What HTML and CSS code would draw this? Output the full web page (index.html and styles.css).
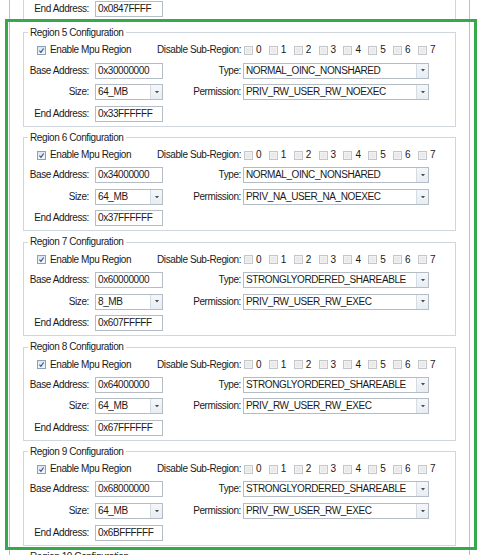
FILE: index.html
```html
<!DOCTYPE html>
<html>
<head>
<meta charset="utf-8">
<title>MPU Regions</title>
<link rel="stylesheet" href="styles.css">
</head>
<body>
<div class="page">
  <div class="frame">
    <div class="region partial">
      <div class="grid one">
        <span class="lbl">End Address:</span>
        <div class="tb">0x0847FFFF</div>
      </div>
    </div>

    <fieldset class="region">
      <legend>Region 5 Configuration</legend>
      <div class="grid">
        <div class="row1">
          <label class="enable"><span class="cb on"><svg viewBox="0 0 10 10"><path d="M2 5.2 L4.2 7.6 L8 2.2" /></svg></span>Enable Mpu Region</label>
          <span class="dis">Disable Sub-Region:</span>
          <div class="subs">
            <span class="sub"><span class="cb off"></span>0</span><span class="sub"><span class="cb off"></span>1</span><span class="sub"><span class="cb off"></span>2</span><span class="sub"><span class="cb off"></span>3</span><span class="sub"><span class="cb off"></span>4</span><span class="sub"><span class="cb off"></span>5</span><span class="sub"><span class="cb off"></span>6</span><span class="sub"><span class="cb off"></span>7</span>
          </div>
        </div>
        <span class="lbl">Base Address:</span>
        <div class="tb">0x30000000</div>
        <span class="lbl r">Type:</span>
        <div class="cbo">NORMAL_OINC_NONSHARED<span class="btn"><svg viewBox="0 0 5 3"><path d="M0 0H5L2.5 3Z"/></svg></span></div>
        <span class="lbl">Size:</span>
        <div class="cbo">64_MB<span class="btn"><svg viewBox="0 0 5 3"><path d="M0 0H5L2.5 3Z"/></svg></span></div>
        <span class="lbl r">Permission:</span>
        <div class="cbo">PRIV_RW_USER_RW_NOEXEC<span class="btn"><svg viewBox="0 0 5 3"><path d="M0 0H5L2.5 3Z"/></svg></span></div>
        <span class="lbl">End Address:</span>
        <div class="tb">0x33FFFFFF</div>
      </div>
    </fieldset>

    <fieldset class="region">
      <legend>Region 6 Configuration</legend>
      <div class="grid">
        <div class="row1">
          <label class="enable"><span class="cb on"><svg viewBox="0 0 10 10"><path d="M2 5.2 L4.2 7.6 L8 2.2" /></svg></span>Enable Mpu Region</label>
          <span class="dis">Disable Sub-Region:</span>
          <div class="subs">
            <span class="sub"><span class="cb off"></span>0</span><span class="sub"><span class="cb off"></span>1</span><span class="sub"><span class="cb off"></span>2</span><span class="sub"><span class="cb off"></span>3</span><span class="sub"><span class="cb off"></span>4</span><span class="sub"><span class="cb off"></span>5</span><span class="sub"><span class="cb off"></span>6</span><span class="sub"><span class="cb off"></span>7</span>
          </div>
        </div>
        <span class="lbl">Base Address:</span>
        <div class="tb">0x34000000</div>
        <span class="lbl r">Type:</span>
        <div class="cbo">NORMAL_OINC_NONSHARED<span class="btn"><svg viewBox="0 0 5 3"><path d="M0 0H5L2.5 3Z"/></svg></span></div>
        <span class="lbl">Size:</span>
        <div class="cbo">64_MB<span class="btn"><svg viewBox="0 0 5 3"><path d="M0 0H5L2.5 3Z"/></svg></span></div>
        <span class="lbl r">Permission:</span>
        <div class="cbo">PRIV_NA_USER_NA_NOEXEC<span class="btn"><svg viewBox="0 0 5 3"><path d="M0 0H5L2.5 3Z"/></svg></span></div>
        <span class="lbl">End Address:</span>
        <div class="tb">0x37FFFFFF</div>
      </div>
    </fieldset>

    <fieldset class="region">
      <legend>Region 7 Configuration</legend>
      <div class="grid">
        <div class="row1">
          <label class="enable"><span class="cb on"><svg viewBox="0 0 10 10"><path d="M2 5.2 L4.2 7.6 L8 2.2" /></svg></span>Enable Mpu Region</label>
          <span class="dis">Disable Sub-Region:</span>
          <div class="subs">
            <span class="sub"><span class="cb off"></span>0</span><span class="sub"><span class="cb off"></span>1</span><span class="sub"><span class="cb off"></span>2</span><span class="sub"><span class="cb off"></span>3</span><span class="sub"><span class="cb off"></span>4</span><span class="sub"><span class="cb off"></span>5</span><span class="sub"><span class="cb off"></span>6</span><span class="sub"><span class="cb off"></span>7</span>
          </div>
        </div>
        <span class="lbl">Base Address:</span>
        <div class="tb">0x60000000</div>
        <span class="lbl r">Type:</span>
        <div class="cbo">STRONGLYORDERED_SHAREABLE<span class="btn"><svg viewBox="0 0 5 3"><path d="M0 0H5L2.5 3Z"/></svg></span></div>
        <span class="lbl">Size:</span>
        <div class="cbo">8_MB<span class="btn"><svg viewBox="0 0 5 3"><path d="M0 0H5L2.5 3Z"/></svg></span></div>
        <span class="lbl r">Permission:</span>
        <div class="cbo">PRIV_RW_USER_RW_EXEC<span class="btn"><svg viewBox="0 0 5 3"><path d="M0 0H5L2.5 3Z"/></svg></span></div>
        <span class="lbl">End Address:</span>
        <div class="tb">0x607FFFFF</div>
      </div>
    </fieldset>

    <fieldset class="region">
      <legend>Region 8 Configuration</legend>
      <div class="grid">
        <div class="row1">
          <label class="enable"><span class="cb on"><svg viewBox="0 0 10 10"><path d="M2 5.2 L4.2 7.6 L8 2.2" /></svg></span>Enable Mpu Region</label>
          <span class="dis">Disable Sub-Region:</span>
          <div class="subs">
            <span class="sub"><span class="cb off"></span>0</span><span class="sub"><span class="cb off"></span>1</span><span class="sub"><span class="cb off"></span>2</span><span class="sub"><span class="cb off"></span>3</span><span class="sub"><span class="cb off"></span>4</span><span class="sub"><span class="cb off"></span>5</span><span class="sub"><span class="cb off"></span>6</span><span class="sub"><span class="cb off"></span>7</span>
          </div>
        </div>
        <span class="lbl">Base Address:</span>
        <div class="tb">0x64000000</div>
        <span class="lbl r">Type:</span>
        <div class="cbo">STRONGLYORDERED_SHAREABLE<span class="btn"><svg viewBox="0 0 5 3"><path d="M0 0H5L2.5 3Z"/></svg></span></div>
        <span class="lbl">Size:</span>
        <div class="cbo">64_MB<span class="btn"><svg viewBox="0 0 5 3"><path d="M0 0H5L2.5 3Z"/></svg></span></div>
        <span class="lbl r">Permission:</span>
        <div class="cbo">PRIV_RW_USER_RW_EXEC<span class="btn"><svg viewBox="0 0 5 3"><path d="M0 0H5L2.5 3Z"/></svg></span></div>
        <span class="lbl">End Address:</span>
        <div class="tb">0x67FFFFFF</div>
      </div>
    </fieldset>

    <fieldset class="region">
      <legend>Region 9 Configuration</legend>
      <div class="grid">
        <div class="row1">
          <label class="enable"><span class="cb on"><svg viewBox="0 0 10 10"><path d="M2 5.2 L4.2 7.6 L8 2.2" /></svg></span>Enable Mpu Region</label>
          <span class="dis">Disable Sub-Region:</span>
          <div class="subs">
            <span class="sub"><span class="cb off"></span>0</span><span class="sub"><span class="cb off"></span>1</span><span class="sub"><span class="cb off"></span>2</span><span class="sub"><span class="cb off"></span>3</span><span class="sub"><span class="cb off"></span>4</span><span class="sub"><span class="cb off"></span>5</span><span class="sub"><span class="cb off"></span>6</span><span class="sub"><span class="cb off"></span>7</span>
          </div>
        </div>
        <span class="lbl">Base Address:</span>
        <div class="tb">0x68000000</div>
        <span class="lbl r">Type:</span>
        <div class="cbo">STRONGLYORDERED_SHAREABLE<span class="btn"><svg viewBox="0 0 5 3"><path d="M0 0H5L2.5 3Z"/></svg></span></div>
        <span class="lbl">Size:</span>
        <div class="cbo">64_MB<span class="btn"><svg viewBox="0 0 5 3"><path d="M0 0H5L2.5 3Z"/></svg></span></div>
        <span class="lbl r">Permission:</span>
        <div class="cbo">PRIV_RW_USER_RW_EXEC<span class="btn"><svg viewBox="0 0 5 3"><path d="M0 0H5L2.5 3Z"/></svg></span></div>
        <span class="lbl">End Address:</span>
        <div class="tb">0x6BFFFFFF</div>
      </div>
    </fieldset>

    <fieldset class="region">
      <legend>Region 10 Configuration</legend>
      <div class="grid"></div>
    </fieldset>
  </div>
  <div class="highlight"></div>
</div>
</body>
</html>
```

FILE: styles.css
```css
* { box-sizing: border-box; }
html, body { margin: 0; padding: 0; background: #fff; }
body {
  font-family: "Liberation Sans", Arial, sans-serif;
  font-size: 10px;
  letter-spacing: -0.4px;
  color: #1a1a1a;
  height: 555px;
  overflow: hidden;
}
.page { position: relative; height: 555px; overflow: hidden; }
.frame {
  margin-left: 9px;
  width: 461px;
  min-height: 600px;
  border-left: 1px solid #b3c1d0;
  border-right: 1px solid #b3c1d0;
  padding: 0 13px;
}
.region {
  border: 1px solid #cfd6dd;
  margin: 4.95px 0 0;
  padding: 5px 0 4px;
  min-width: 0;
}
.region.partial {
  border-top: none;
  margin-top: 0;
  padding: 1px 0 4px;
}
legend {
  margin-left: 4px;
  padding: 0 2px;
  line-height: 12px;
  height: 12px;
  color: #222;
}
.grid {
  display: grid;
  grid-template-columns: 71px 68px 80px 186px;
  grid-template-rows: 13px 16px 16px 16px;
  row-gap: 5.6px;
  align-items: center;
}
.grid.one { grid-template-rows: 16px; }
.row1 {
  grid-column: 1 / -1;
  display: flex;
  align-items: center;
  height: 12px;
  line-height: 12px;
  white-space: nowrap;
}
.enable {
  flex: none;
  display: flex;
  align-items: center;
  width: 133px;
  padding-left: 13px;
  gap: 4px;
}
.dis { flex: none; width: 80px; white-space: nowrap; }
.subs { flex: none; display: flex; margin-left: 7px; }
.sub {
  flex: none;
  display: flex;
  align-items: center;
  width: 24.85px;
  gap: 3px;
}
.cb {
  display: inline-block;
  width: 9px;
  height: 9px;
  flex: none;
}
.cb.on {
  border: 1px solid #8ea0b4;
  background: linear-gradient(#dde6ef, #f3f6f9);
}
.cb.on svg { display: block; width: 100%; height: 100%; }
.cb.on path { fill: none; stroke: #2c4f93; stroke-width: 1.6; }
.cb.off {
  border: 1px solid #c3c7cc;
  background: #eaeaea;
  box-shadow: inset 0 0 0 1px #f2f2f2;
}
.lbl {
  text-align: right;
  padding-right: 6px;
  white-space: nowrap;
  line-height: 12px;
}
.lbl.r { padding-right: 2px; }
.tb, .cbo {
  height: 16px;
  border: 1px solid #b4bcc5;
  background: #fff;
  line-height: 14px;
  padding-left: 2px;
  white-space: nowrap;
  position: relative;
}
.cbo .btn {
  position: absolute;
  right: 0;
  top: 0;
  bottom: 0;
  width: 12px;
  border-left: 1px solid #d3dbe3;
  background: linear-gradient(#f4f7fa, #e7edf3);
  display: flex;
  align-items: center;
  justify-content: center;
}
.cbo .btn svg { width: 4px; height: 2.4px; display: block; }
.cbo .btn path { fill: #4a4a4a; }
.highlight {
  position: absolute;
  left: 5px;
  top: 19px;
  width: 472px;
  height: 531px;
  border: 3px solid #38a84c;
  pointer-events: none;
}
```
